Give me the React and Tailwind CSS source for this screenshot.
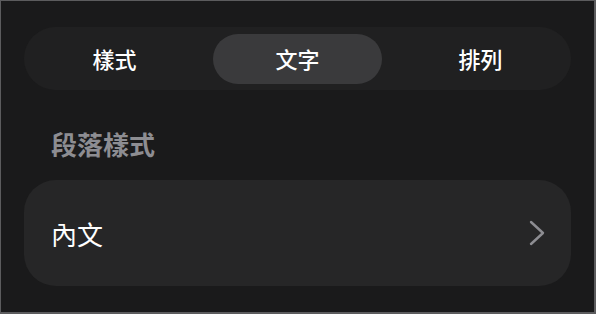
const tabs = ["樣式", "文字", "排列"];

function Chevron() {
  return (
    <svg width="16" height="26" viewBox="0 0 16 26" fill="none" className="shrink-0">
      <polyline
        points="2,2 14,13 2,24"
        stroke="#8d8d92"
        strokeWidth="2.4"
        strokeLinecap="round"
        strokeLinejoin="round"
      />
    </svg>
  );
}

export default function App() {
  const active = "文字";

  return (
    <div
      className="h-[314px] w-[596px] overflow-hidden border border-r-2 border-b-2 border-[#5c5c5e] bg-[#1a1a1b] text-white"
      style={{ fontFamily: '"Noto Sans CJK TC", "Noto Sans", sans-serif' }}
    >
      <div className="px-[23px] pt-[26px]">
        <div className="flex h-[63px] items-center gap-[14px] rounded-full bg-[#202021] px-[6px]">
          {tabs.map((tab) => (
            <button
              key={tab}
              type="button"
              className={`flex h-[50px] flex-1 items-center justify-center rounded-full text-[22px] font-medium text-white ${
                tab === active ? "bg-[#3a3a3c]" : ""
              }`}
            >
              {tab}
            </button>
          ))}
        </div>

        <h2 className="mt-[38px] pl-[27px] text-[26px] leading-[32px] font-bold text-[#8d8d92]">段落樣式</h2>

        <button
          type="button"
          className="mt-[20px] flex h-[106px] w-full items-center justify-between rounded-[32px] bg-[#262627] pr-[26px] pl-[27px]"
        >
          <span className="text-[26px] text-white">內文</span>
          <Chevron />
        </button>
      </div>
    </div>
  );
}
